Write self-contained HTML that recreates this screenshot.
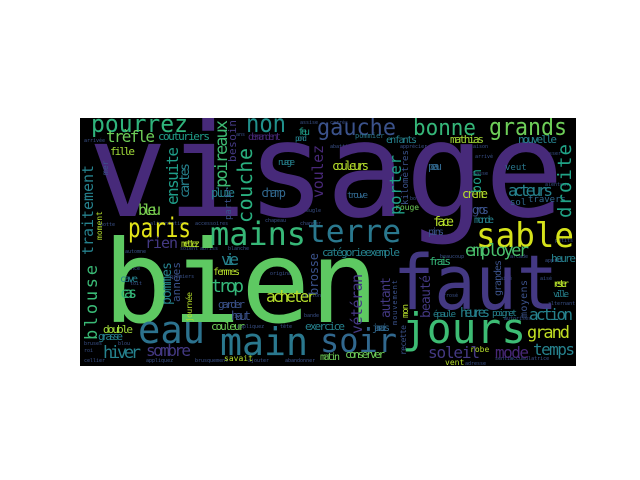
<!DOCTYPE html>
<html><head><meta charset="utf-8"><style>
html,body{margin:0;padding:0;background:#fff;width:640px;height:480px;overflow:hidden}
svg{display:block}
text{font-family:"DejaVu Sans Mono","Liberation Mono",monospace}
</style></head><body>
<svg width="640" height="480" viewBox="0 0 640 480" xmlns="http://www.w3.org/2000/svg" lengthAdjust="spacingAndGlyphs">
<rect x="80" y="118" width="496" height="248" fill="#000"/>
<clipPath id="c"><rect x="80" y="118" width="496" height="248"/></clipPath>
<g clip-path="url(#c)">
<!-- small filler -->
<g font-size="5" fill="#3b528b">
<text x="84" y="142">arrivée</text><text x="236" y="136">ans</text><text x="300" y="124">assise</text><text x="330" y="124">carrés</text><text x="330" y="148">abattis</text><text x="400" y="148">apprécier</text><text x="470" y="148">saison</text><text x="540" y="155">brosser</text><text x="475" y="158">arrivé</text><text x="470" y="175">chasse</text><text x="545" y="186">alentour</text><text x="360" y="176">beau</text><text x="410" y="200">bord</text><text x="300" y="225">changer</text><text x="300" y="212">aveugle</text><text x="265" y="222">chapeau</text><text x="150" y="225">alimentation</text><text x="195" y="225">accessoires</text><text x="100" y="226">botte</text><text x="125" y="253">automne</text><text x="180" y="250">soient</text><text x="200" y="250">abriss</text><text x="228" y="250">blanche</text><text x="122" y="270">chance</text><text x="130" y="285">toit</text><text x="170" y="278">premiers</text><text x="270" y="275">original</text><text x="270" y="290">arrosé</text><text x="303" y="297">ballon</text><text x="225" y="318">arrive</text><text x="304" y="317">bande</text><text x="237" y="328">appliquez</text><text x="280" y="328">tête</text><text x="84" y="345">bruses</text><text x="118" y="345">blou</text><text x="84" y="352">roi</text><text x="84" y="362">cellier</text><text x="146" y="362">appliquez</text><text x="195" y="362">brusquement</text><text x="248" y="362">ajouter</text><text x="285" y="362">abandonner</text><text x="500" y="280">aisé</text><text x="540" y="280">aisé</text><text x="548" y="305">alternant</text><text x="504" y="320">autorisés</text><text x="545" y="262">appris</text><text x="510" y="360">accumulatrice</text><text x="465" y="365">adresse</text><text x="495" y="360">sentis</text><text x="440" y="258">beaucoup</text><text x="510" y="258">arcade</text><text x="440" y="297">arrosé</text><text x="555" y="242">petits</text>
</g>
<!-- big -->
<text x="88" y="216" font-size="132" fill="#472a7a" textLength="476" lengthAdjust="spacingAndGlyphs">visage</text>
<text x="103" y="322" font-size="114" fill="#5ec962" textLength="276" lengthAdjust="spacingAndGlyphs">bien</text>
<text x="393" y="309" font-size="76" fill="#443983" textLength="165" lengthAdjust="spacingAndGlyphs">faut</text>
<text x="402" y="343" font-size="42" fill="#3dbc74" textLength="124" lengthAdjust="spacingAndGlyphs">jours</text>
<text x="138" y="343" font-size="38" fill="#2c728e" textLength="67" lengthAdjust="spacingAndGlyphs">eau</text>
<text x="220" y="355" font-size="38" fill="#2a788e" textLength="88" lengthAdjust="spacingAndGlyphs">main</text>
<text x="320" y="352" font-size="33" fill="#31688e" textLength="77" lengthAdjust="spacingAndGlyphs">soir</text>
<text x="210" y="245" font-size="32" fill="#37b878" textLength="96" lengthAdjust="spacingAndGlyphs">mains</text>
<text x="307" y="242" font-size="31" fill="#2a788e" textLength="94" lengthAdjust="spacingAndGlyphs">terre</text>
<text x="476" y="247" font-size="34" fill="#d5e21a" textLength="98" lengthAdjust="spacingAndGlyphs">sable</text>
<text x="128" y="237" font-size="27" fill="#e2e418" textLength="63" lengthAdjust="spacingAndGlyphs">paris</text>
<text x="91" y="132" font-size="24" fill="#2fb47c" textLength="97" lengthAdjust="spacingAndGlyphs">pourrez</text>
<text x="246" y="132" font-size="25" fill="#21918c" textLength="40" lengthAdjust="spacingAndGlyphs">non</text>
<text x="317" y="135" font-size="23" fill="#3b528b" textLength="79" lengthAdjust="spacingAndGlyphs">gauche</text>
<text x="413" y="135" font-size="22" fill="#35b779" textLength="63" lengthAdjust="spacingAndGlyphs">bonne</text>
<text x="489" y="135" font-size="24" fill="#6ece58" textLength="78" lengthAdjust="spacingAndGlyphs">grands</text>
<!-- medium horizontal -->
<g lengthAdjust="spacingAndGlyphs">
<text x="106" y="142" font-size="16" fill="#6ece58" textLength="49">trèfle</text>
<text x="158" y="140" font-size="11" fill="#1f9e89" textLength="52">couturiers</text>
<text x="110" y="155" font-size="11" fill="#a0da39" textLength="25">fille</text>
<text x="248" y="140" font-size="10" fill="#482878" textLength="33">demandent</text>
<text x="298" y="135" font-size="10" fill="#1f9e89" textLength="12">feu</text>
<text x="295" y="141" font-size="8" fill="#26828e" textLength="12">pond</text>
<text x="386" y="143" font-size="10" fill="#26828e" textLength="31">enfants</text>
<text x="450" y="143" font-size="11" fill="#a5db36" textLength="34">mathias</text>
<text x="518" y="143" font-size="11" fill="#26828e" textLength="39">nouvelle</text>
<text x="355" y="138" font-size="7" fill="#2a788e">pommier</text>
<text x="278" y="165" font-size="9" fill="#26828e" textLength="17">nuage</text>
<text x="332" y="170" font-size="12" fill="#b5de2b" textLength="37">couleurs</text>
<text x="428" y="170" font-size="11" fill="#31688e" textLength="14">peau</text>
<text x="505" y="170" font-size="9" fill="#2a788e">veut</text>
<text x="211" y="197" font-size="12" fill="#26828e" textLength="24">pluie</text>
<text x="261" y="197" font-size="12" fill="#31688e" textLength="25">champ</text>
<text x="347" y="198" font-size="9" fill="#31688e" textLength="21">trouve</text>
<text x="462" y="198" font-size="12" fill="#b5de2b" textLength="26">crème</text>
<text x="508" y="196" font-size="16" fill="#26828e" textLength="45">acteurs</text>
<text x="510" y="205" font-size="9" fill="#31688e">sol</text>
<text x="528" y="202" font-size="9" fill="#31688e">travers</text>
<text x="395" y="210" font-size="8" fill="#6ece58">rouge</text>
<text x="472" y="214" font-size="12" fill="#3b528b" textLength="17">gros</text>
<text x="138" y="215" font-size="15" fill="#7ad151" textLength="23">bleu</text>
<text x="474" y="223" font-size="10" fill="#26828e" textLength="20">monde</text>
<text x="433" y="226" font-size="13" fill="#b5de2b" textLength="21">face</text>
<text x="428" y="235" font-size="10" fill="#3b528b" textLength="16">pins</text>
<text x="145" y="248" font-size="15" fill="#443983" textLength="33">rien</text>
<text x="181" y="247" font-size="10" fill="#b5de2b" textLength="19">mettez</text>
<text x="322" y="256" font-size="11" fill="#26828e" textLength="78">catégorieexemple</text>
<text x="465" y="256" font-size="17" fill="#4ac16d" textLength="64">employer</text>
<text x="429" y="265" font-size="11" fill="#35b779" textLength="22">frais</text>
<text x="551" y="262" font-size="11" fill="#26828e" textLength="25">heure</text>
<text x="221" y="265" font-size="16" fill="#26828e" textLength="18">vie</text>
<text x="213" y="275" font-size="10" fill="#b5de2b" textLength="27">femmes</text>
<text x="120" y="282" font-size="10" fill="#26828e" textLength="18">cave</text>
<text x="553" y="287" font-size="10" fill="#b5de2b" textLength="16">rester</text>
<text x="211" y="292" font-size="18" fill="#35b779" textLength="33">trop</text>
<text x="120" y="298" font-size="15" fill="#35b779" textLength="17">cas</text>
<text x="553" y="297" font-size="9" fill="#26828e" textLength="16">ville</text>
<text x="266" y="302" font-size="16" fill="#b5de2b" textLength="50">acheter</text>
<text x="218" y="308" font-size="11" fill="#3b528b" textLength="27">garder</text>
<text x="433" y="317" font-size="9" fill="#26828e" textLength="23">épaule</text>
<text x="460" y="317" font-size="13" fill="#26828e" textLength="30">heures</text>
<text x="492" y="316" font-size="9" fill="#26828e" textLength="25">poignet</text>
<text x="231" y="320" font-size="12" fill="#3b528b" textLength="20">haut</text>
<text x="529" y="320" font-size="16" fill="#26828e" textLength="44">action</text>
<text x="103" y="333" font-size="11" fill="#a0da39" textLength="30">double</text>
<text x="211" y="330" font-size="11" fill="#6ece58" textLength="34">couleur</text>
<text x="305" y="330" font-size="11" fill="#26828e" textLength="40">exercice</text>
<text x="372" y="331" font-size="10" fill="#31688e" textLength="18">jamais</text>
<text x="527" y="338" font-size="17" fill="#c2df23" textLength="43">grand</text>
<text x="98" y="340" font-size="11" fill="#26828e" textLength="25">grasse</text>
<text x="533" y="355" font-size="16" fill="#26828e" textLength="42">temps</text>
<text x="146" y="356" font-size="16" fill="#443983" textLength="45">sombre</text>
<text x="103" y="358" font-size="17" fill="#26828e" textLength="38">hiver</text>
<text x="345" y="358" font-size="11" fill="#6ece58" textLength="40">conserver</text>
<text x="428" y="358" font-size="16" fill="#443983" textLength="52">soleil</text>
<text x="495" y="358" font-size="16" fill="#482878" textLength="34">mode</text>
<text x="470" y="352" font-size="8" fill="#b5de2b">robe</text>
<text x="320" y="360" font-size="10" fill="#6ece58" textLength="20">matin</text>
<text x="224" y="361" font-size="8" fill="#b5de2b">savait</text>
<text x="445" y="365" font-size="8" fill="#b5de2b">vent</text>
</g>
<!-- vertical -->
<g lengthAdjust="spacingAndGlyphs">
<text transform="translate(93,255) rotate(-90)" font-size="15" fill="#26828e" textLength="90">traitement</text>
<text transform="translate(97,340) rotate(-90)" font-size="17" fill="#3aba76" textLength="75">blouse</text>
<text transform="translate(178,205) rotate(-90)" font-size="16" fill="#1f9e89" textLength="58">ensuite</text>
<text transform="translate(189,198) rotate(-90)" font-size="13" fill="#26828e" textLength="35">cartes</text>
<text transform="translate(227,188) rotate(-90)" font-size="17" fill="#3dbc74" textLength="68">poireaux</text>
<text transform="translate(236,162) rotate(-90)" font-size="11" fill="#443983" textLength="42">besoin</text>
<text transform="translate(252,223) rotate(-90)" font-size="20" fill="#29af7f" textLength="75">couche</text>
<text transform="translate(323,198) rotate(-90)" font-size="15" fill="#482878" textLength="53">voulez</text>
<text transform="translate(401,215) rotate(-90)" font-size="16" fill="#1fa188" textLength="60">porter</text>
<text transform="translate(408,205) rotate(-90)" font-size="9" fill="#3b528b" textLength="55">kilomètres</text>
<text transform="translate(481,193) rotate(-90)" font-size="13" fill="#1f9e89" textLength="24">bon</text>
<text transform="translate(571,218) rotate(-90)" font-size="19" fill="#20a386" textLength="74">droite</text>
<text transform="translate(171,305) rotate(-90)" font-size="13" fill="#26828e" textLength="43">pommes</text>
<text transform="translate(180,302) rotate(-90)" font-size="11" fill="#3b528b" textLength="40">années</text>
<text transform="translate(192,322) rotate(-90)" font-size="8" fill="#b5de2b" textLength="30">journée</text>
<text transform="translate(318,295) rotate(-90)" font-size="12" fill="#3b528b" textLength="42">brosse</text>
<text transform="translate(362,334) rotate(-90)" font-size="15" fill="#443983" textLength="60">vétéran</text>
<text transform="translate(390,318) rotate(-90)" font-size="13" fill="#443983" textLength="41">autant</text>
<text transform="translate(397,325) rotate(-90)" font-size="7" fill="#3b528b" textLength="45">mouvement</text>
<text transform="translate(430,318) rotate(-90)" font-size="13" fill="#443983" textLength="43">beauté</text>
<text transform="translate(408,318) rotate(-90)" font-size="9" fill="#b5de2b" textLength="14">mon</text>
<text transform="translate(501,296) rotate(-90)" font-size="10" fill="#3b528b" textLength="36">grandes</text>
<text transform="translate(527,318) rotate(-90)" font-size="10" fill="#3b528b" textLength="38">moyens</text>
<text transform="translate(406,355) rotate(-90)" font-size="8" fill="#3b528b" textLength="30">recette</text>
<text transform="translate(108,175) rotate(-90)" font-size="8" fill="#3b528b">mer</text>
<text transform="translate(102,240) rotate(-90)" font-size="8" fill="#b5de2b">moment</text>
<text transform="translate(231,220) rotate(-90)" font-size="9" fill="#3b528b">partir</text>
</g>
</g>
</svg>
</body></html>
